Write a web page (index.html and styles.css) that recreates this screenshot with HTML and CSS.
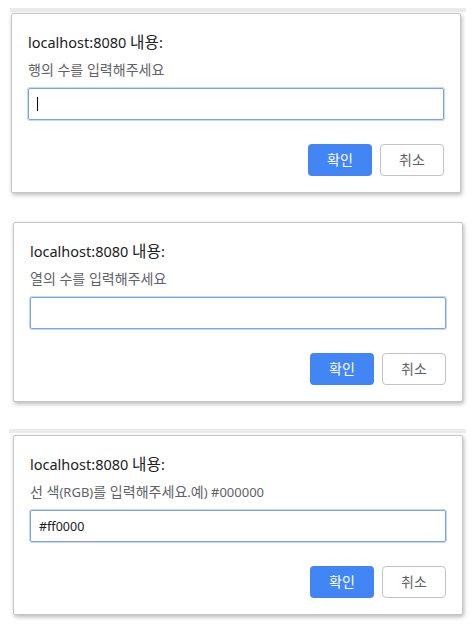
FILE: index.html
```html
<!DOCTYPE html>
<html lang="ko">
<head>
<meta charset="utf-8">
<link rel="stylesheet" href="styles.css">
</head>
<body>
<div class="shot shot-1">
  <div class="strip strip-1"></div>
  <div class="dialog">
    <div class="title">localhost:8080 <span class="ko">내용</span>:</div>
    <div class="message"><span class="ko">행의 수를 입력해주세요</span></div>
    <div class="field"><span class="caret"></span></div>
    <div class="actions">
      <div class="btn btn-ok"><span class="ko">확인</span></div>
      <div class="btn btn-cancel"><span class="ko">취소</span></div>
    </div>
  </div>
</div>
<div class="shot shot-2">
  <div class="dialog">
    <div class="title">localhost:8080 <span class="ko">내용</span>:</div>
    <div class="message"><span class="ko">열의 수를 입력해주세요</span></div>
    <div class="field"></div>
    <div class="actions">
      <div class="btn btn-ok"><span class="ko">확인</span></div>
      <div class="btn btn-cancel"><span class="ko">취소</span></div>
    </div>
  </div>
</div>
<div class="shot shot-3">
  <div class="strip strip-3"></div>
  <div class="dialog">
    <div class="title">localhost:8080 <span class="ko">내용</span>:</div>
    <div class="message"><span class="ko">선 색</span>(RGB)<span class="ko">를 입력해주세요</span>.<span class="ko">예</span>) #000000</div>
    <div class="field"><span class="value">#ff0000</span></div>
    <div class="actions">
      <div class="btn btn-ok"><span class="ko">확인</span></div>
      <div class="btn btn-cancel"><span class="ko">취소</span></div>
    </div>
  </div>
</div>
</body>
</html>
```
FILE: styles.css
```css
html, body {
  margin: 0;
  padding: 0;
  background: #ffffff;
}
body {
  width: 475px;
  height: 625px;
  overflow: hidden;
  padding-top: 8px;
  box-sizing: border-box;
  font-family: "Noto Sans", "Noto Sans CJK KR", sans-serif;
  display: flex;
  flex-direction: column;
}
.ko {
  font-size: 1.08em;
}
.shot {
  display: flex;
  flex-direction: column;
}
.shot-2 {
  margin-top: 29px;
}
.shot-3 {
  margin-top: 27px;
}
.strip {
  height: 4px;
  background: #ebebeb;
}
.strip-1 {
  width: 456px;
  margin-left: 10px;
  margin-bottom: 1px;
}
.strip-3 {
  width: 457px;
  margin-left: 9px;
  margin-bottom: 2px;
}
.dialog {
  box-sizing: border-box;
  width: 450px;
  height: 180px;
  border: 1px solid #c6c6c6;
  border-radius: 2px;
  box-shadow: 1px 2px 4px rgba(0, 0, 0, 0.28);
  padding: 18px 16px 15px 16px;
  display: flex;
  flex-direction: column;
  background: #fff;
}
.shot-1 .dialog {
  margin-left: 11px;
}
.shot-2 .dialog,
.shot-3 .dialog {
  margin-left: 13px;
}
.title {
  height: 20px;
  line-height: 20px;
  font-size: 14.5px;
  color: #202124;
  white-space: nowrap;
}
.message {
  margin-top: 9px;
  height: 18px;
  line-height: 18px;
  font-size: 13px;
  color: #5f6368;
  white-space: nowrap;
}
.field {
  margin-top: 9px;
  box-sizing: border-box;
  height: 32px;
  border: 1px solid #7ea3e4;
  box-shadow: 0 0 0 1px #c5d7f6;
  border-radius: 2px;
  display: flex;
  align-items: center;
  padding-left: 8px;
}
.caret {
  display: block;
  width: 1px;
  height: 14px;
  background: #000;
}
.value {
  font-size: 12.5px;
  color: #202124;
}
.actions {
  margin-top: 24px;
  display: flex;
  justify-content: flex-end;
  gap: 8px;
}
.btn {
  box-sizing: border-box;
  width: 64px;
  height: 32px;
  border-radius: 4px;
  font-size: 13px;
  line-height: 16px;
  display: flex;
  align-items: center;
  justify-content: center;
}
.btn-ok {
  background: #4285f4;
  color: #fff;
}
.btn-cancel {
  border: 1px solid #c3c3c3;
  color: #5f6368;
  background: #fff;
}
```
